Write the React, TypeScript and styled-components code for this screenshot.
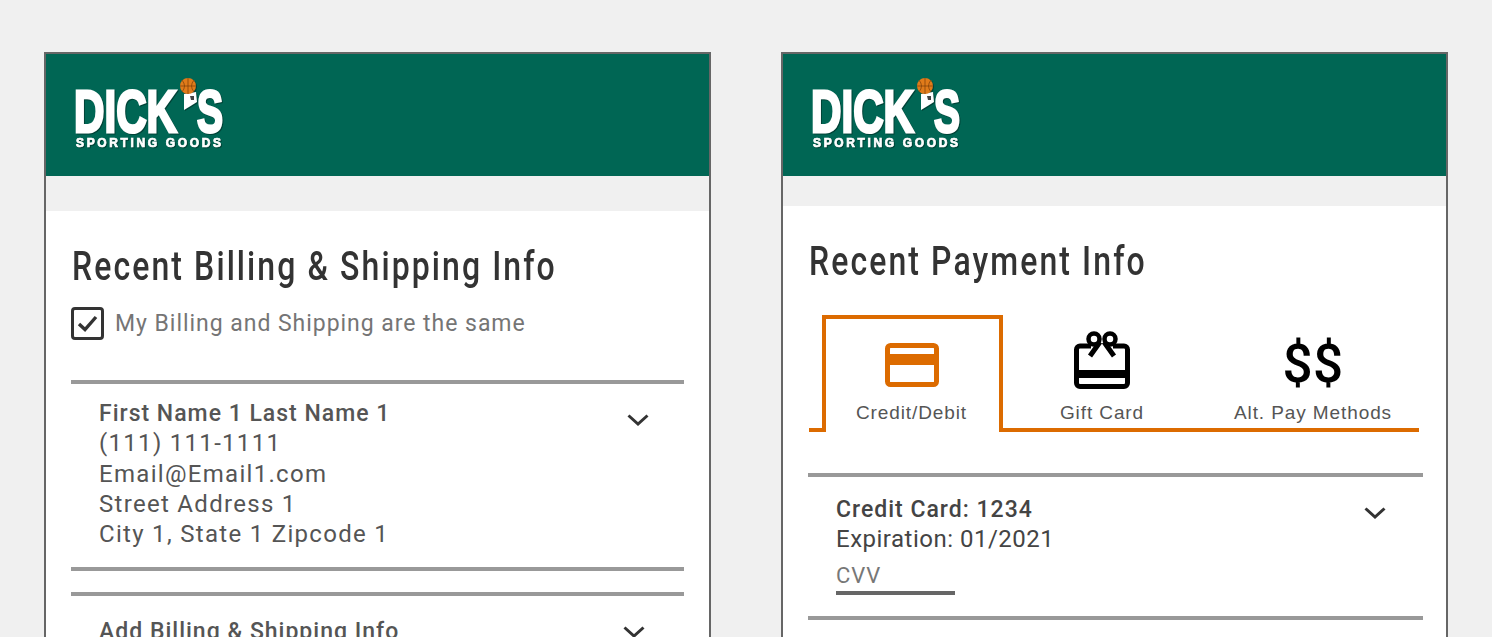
import React from "react";
import styled, { createGlobalStyle } from "styled-components";

const GlobalStyle = createGlobalStyle`
  html, body {
    margin: 0;
    height: 637px;
    overflow: hidden;
    background: #f0f0f0;
    font-family: Roboto, "Liberation Sans", sans-serif;
  }
`;

const Page = styled.div`
  display: flex;
  gap: 70px;
  padding: 52px 44px 0;
  height: 585px;
  overflow: hidden;
`;

const Card = styled.section`
  width: 667px;
  flex: none;
  box-sizing: border-box;
  border: 2px solid #666;
  border-bottom: none;
  height: 700px;
  background: #f0f0f0;
`;

const Header = styled.header`
  height: 122px;
  background: #006654;
  padding: 22px 0 0 27px;
  box-sizing: border-box;
`;

const LogoMark = styled.svg`
  display: block;
  filter: drop-shadow(1px 1px 0 rgba(0, 0, 0, 0.35));
`;

const Content = styled.div<{ $offset: number; $left: number; $right: number }>`
  margin-top: ${(p) => p.$offset}px;
  background: #fff;
  padding: 33px ${(p) => p.$right}px 0 ${(p) => p.$left}px;
  height: 500px;
`;

const Title = styled.h1<{ $indent: number }>`
  margin: 0 0 0 ${(p) => p.$indent}px;
  font-weight: 500;
  font-size: 40px;
  line-height: 46px;
  letter-spacing: 2.6px;
  color: #333;
  white-space: nowrap;
  transform: scaleX(0.8);
  transform-origin: left center;
`;

const CheckRow = styled.label`
  display: flex;
  align-items: center;
  gap: 11px;
  margin-top: 17px;
  font-size: 23px;
  letter-spacing: 0.96px;
  color: #757575;
`;

const CheckBox = styled.span`
  width: 33px;
  height: 33px;
  flex: none;
  box-sizing: border-box;
  border: 3.5px solid #333;
  border-radius: 4px;
  display: flex;
  align-items: center;
  justify-content: center;
`;

const Rule = styled.hr<{ $top: number }>`
  margin: ${(p) => p.$top}px 0 0;
  border: none;
  height: 4px;
  background: #999;
`;

const Item = styled.div<{ $top: number; $bottom: number; $right: number; $spacing: number; $color: string }>`
  display: flex;
  justify-content: space-between;
  align-items: flex-start;
  padding: ${(p) => p.$top}px ${(p) => p.$right}px ${(p) => p.$bottom}px 28px;
  font-size: 24px;
  line-height: 30.3px;
  letter-spacing: ${(p) => p.$spacing}px;
  color: ${(p) => p.$color};
`;

const Lines = styled.div`
  display: flex;
  flex-direction: column;
`;

const Strong = styled.div`
  font-weight: 500;
  font-size: 23px;
  letter-spacing: 1px;
  padding-top: 1.5px;
  line-height: 28.8px;
`;

const Chevron = styled.svg<{ $top: number }>`
  margin-top: ${(p) => p.$top}px;
  flex: none;
`;

const TabRow = styled.div`
  display: flex;
  margin: 30px 4px 0 1px;
  padding-left: 13px;
  border-bottom: 4px solid #dc6b00;
  height: 113px;
`;

const Tab = styled.div<{ $active?: boolean; $width: number }>`
  width: ${(p) => p.$width}px;
  flex: none;
  height: 117px;
  box-sizing: border-box;
  display: flex;
  flex-direction: column;
  align-items: center;
  padding-right: ${(p) => (p.$active ? 2 : 0)}px;
  border: 4px solid ${(p) => (p.$active ? "#dc6b00" : "transparent")};
  border-bottom: none;
  background: ${(p) => (p.$active ? "#fff" : "transparent")};
  font-family: "Liberation Sans", Arial, sans-serif;
  font-size: 19px;
  letter-spacing: 0.9px;
  color: #555;
  white-space: nowrap;
`;

const TabIcon = styled.div<{ $top: number }>`
  height: ${(p) => 83 - p.$top}px;
  margin-top: ${(p) => p.$top}px;
  display: flex;
  align-items: flex-start;
`;

const Dollars = styled.div`
  font-family: Roboto, "Liberation Sans", sans-serif;
  font-weight: 500;
  font-size: 53px;
  line-height: 56px;
  letter-spacing: 0.5px;
  color: #000;
`;

const CvvLabel = styled.div`
  margin-top: 6px;
  width: 119px;
  border-bottom: 4px solid #666;
  color: #777;
  font-size: 22px;
  letter-spacing: 1px;
`;

const ChevronDown = ({ top }: { top: number }) => (
  <Chevron $top={top} width="22" height="12" viewBox="0 0 22 12">
    <path d="M1.5 1.5 L11 10 L20.5 1.5" fill="none" stroke="#333" strokeWidth="3" />
  </Chevron>
);

const Logo = () => (
  <LogoMark width="156" height="76" viewBox="0 0 156 76">
    <g fontFamily="'Liberation Sans', Arial, sans-serif" fontWeight="700" fill="#fff">
      <text x="1" y="56" fontSize="60" textLength="103" lengthAdjust="spacingAndGlyphs" stroke="#fff" strokeWidth="3">
        DICK
      </text>
      <text x="124" y="56" fontSize="60" textLength="26" lengthAdjust="spacingAndGlyphs" stroke="#fff" strokeWidth="3">
        S
      </text>
      <text x="3" y="71" fontSize="12" textLength="145" lengthAdjust="spacing" stroke="#fff" strokeWidth="0.7">
        SPORTING GOODS
      </text>
    </g>
    <path d="M111 18 L123 16 L124 26 L116 31 L111 34 Z" fill="#fff" />
    <path d="M117 20 h4 v4 h-3 z" fill="#444" />
    <circle cx="115" cy="10" r="8" fill="#e07b1a" />
    <path d="M107 10 H123 M115 2 V18 M109 4 Q114 10 109 16 M121 4 Q116 10 121 16" fill="none" stroke="#7a3d08" strokeWidth="0.7" />
  </LogoMark>
);

const CardIcon = () => (
  <svg width="54" height="44" viewBox="0 0 54 44">
    <rect x="2.5" y="2.5" width="49" height="39" rx="3" fill="none" stroke="#dc6b00" strokeWidth="5" />
    <rect x="2" y="11" width="50" height="11" fill="#dc6b00" />
  </svg>
);

const GiftIcon = () => (
  <svg width="56" height="58" viewBox="0 0 56 58">
    <path d="M17 15 H6 a3.5 3.5 0 0 0 -3.5 3.5 V52 a3.5 3.5 0 0 0 3.5 3.5 H50 a3.5 3.5 0 0 0 3.5 -3.5 V18.5 a3.5 3.5 0 0 0 -3.5 -3.5 H39" fill="none" stroke="#000" strokeWidth="5" />
    <rect x="2" y="39" width="52" height="8" fill="#000" />
    <circle cx="20" cy="8" r="5.5" fill="none" stroke="#000" strokeWidth="4.5" />
    <circle cx="36" cy="8" r="5.5" fill="none" stroke="#000" strokeWidth="4.5" />
    <path d="M26 11 L16 25 M30 11 L40 25" fill="none" stroke="#000" strokeWidth="5" />
  </svg>
);

const Check = () => (
  <svg width="21" height="17" viewBox="0 0 21 17">
    <path d="M2 9 L8 14.5 L19 2" fill="none" stroke="#333" strokeWidth="3.4" />
  </svg>
);

export default function App() {
  return (
    <>
      <GlobalStyle />
      <Page>
        <Card>
          <Header>
            <Logo />
          </Header>
          <Content $offset={35} $left={25} $right={25}>
            <Title $indent={1}>Recent Billing &amp; Shipping Info</Title>
            <CheckRow>
              <CheckBox>
                <Check />
              </CheckBox>
              My Billing and Shipping are the same
            </CheckRow>
            <Rule $top={40} />
            <Item $top={14} $bottom={18} $right={35} $spacing={1.3} $color="#555">
              <Lines>
                <Strong>First Name 1 Last Name 1</Strong>
                <span>(111) 111-1111</span>
                <span>Email@Email1.com</span>
                <span>Street Address 1</span>
                <span>City 1, State 1 Zipcode 1</span>
              </Lines>
              <ChevronDown top={16} />
            </Item>
            <Rule $top={0} />
            <Rule $top={21} />
            <Item $top={20} $bottom={0} $right={39} $spacing={1} $color="#555">
              <Lines>
                <Strong>Add Billing &amp; Shipping Info</Strong>
              </Lines>
              <ChevronDown top={10} />
            </Item>
          </Content>
        </Card>
        <Card>
          <Header>
            <Logo />
          </Header>
          <Content $offset={30} $left={25} $right={23}>
            <Title $indent={1}>Recent Payment Info</Title>
            <TabRow>
              <Tab $active $width={181}>
                <TabIcon $top={24}>
                  <CardIcon />
                </TabIcon>
                Credit/Debit
              </Tab>
              <Tab $width={198}>
                <TabIcon $top={12}>
                  <GiftIcon />
                </TabIcon>
                Gift Card
              </Tab>
              <Tab $width={224}>
                <TabIcon $top={17}>
                  <Dollars>$$</Dollars>
                </TabIcon>
                Alt. Pay Methods
              </Tab>
            </TabRow>
            <Rule $top={41} />
            <Item $top={17} $bottom={21} $right={37} $spacing={0.5} $color="#444">
              <Lines>
                <Strong>Credit Card: 1234</Strong>
                <span>Expiration: 01/2021</span>
                <CvvLabel>CVV</CvvLabel>
              </Lines>
              <ChevronDown top={13} />
            </Item>
            <Rule $top={0} />
          </Content>
        </Card>
      </Page>
    </>
  );
}
